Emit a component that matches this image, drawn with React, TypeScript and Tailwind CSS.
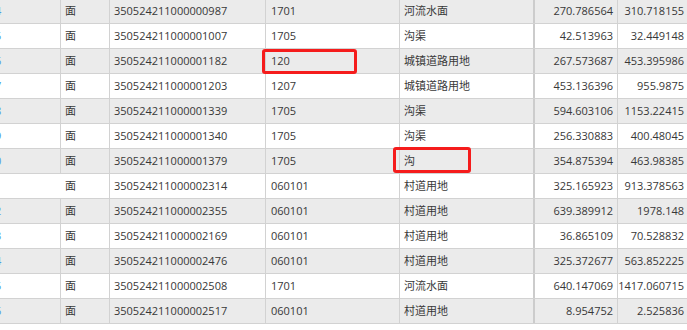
import React from "react";

type Row = { tail: string; code: string; dl: string; name: string; a: string; b: string };

const rows: Row[] = [
  { tail: "4", code: "350524211000000987", dl: "1701", name: "河流水面", a: "270.786564", b: "310.718155" },
  { tail: "5", code: "350524211000001007", dl: "1705", name: "沟渠", a: "42.513963", b: "32.449148" },
  { tail: "6", code: "350524211000001182", dl: "120", name: "城镇道路用地", a: "267.573687", b: "453.395986" },
  { tail: "7", code: "350524211000001203", dl: "1207", name: "城镇道路用地", a: "453.136396", b: "955.9875" },
  { tail: "8", code: "350524211000001339", dl: "1705", name: "沟渠", a: "594.603106", b: "1153.22415" },
  { tail: "9", code: "350524211000001340", dl: "1705", name: "沟渠", a: "256.330883", b: "400.48045" },
  { tail: "0", code: "350524211000001379", dl: "1705", name: "沟", a: "354.875394", b: "463.98385" },
  { tail: "", code: "350524211000002314", dl: "060101", name: "村道用地", a: "325.165923", b: "913.378563" },
  { tail: "2", code: "350524211000002355", dl: "060101", name: "村道用地", a: "639.389912", b: "1978.148" },
  { tail: "3", code: "350524211000002169", dl: "060101", name: "村道用地", a: "36.865109", b: "70.528832" },
  { tail: "4", code: "350524211000002476", dl: "060101", name: "村道用地", a: "325.372677", b: "563.852225" },
  { tail: "5", code: "350524211000002508", dl: "1701", name: "河流水面", a: "640.147069", b: "1417.060715" },
  { tail: "6", code: "350524211000002517", dl: "060101", name: "村道用地", a: "8.954752", b: "2.525836" },
];

function Cells({ r }: { r?: Row }) {
  return (
    <>
      {/* row number column is scrolled out of view, only the last pixels show */}
      <div className="w-[61px] shrink-0 overflow-hidden border-r border-[#d2d2d2]">
        <span className="block -ml-[5px] w-[7px] overflow-hidden text-[#4b9be6]">{r?.tail}</span>
      </div>
      <div className="w-[49px] shrink-0 border-r border-[#d2d2d2] pl-[4px]">{r ? "面" : ""}</div>
      <div className="w-[156px] shrink-0 border-r border-[#d2d2d2] pl-[4px]">{r?.code}</div>
      <div className="w-[134px] shrink-0 border-r border-[#d2d2d2] pl-[5px]">{r?.dl}</div>
      <div className="w-[135px] shrink-0 border-r-2 border-[#cccccc] pl-[4px]">{r?.name}</div>
      <div className="w-[83px] shrink-0 border-r border-[#d2d2d2] pr-[4px] text-right">{r?.a}</div>
      <div className="flex-1 pr-[3px] text-right">{r?.b}</div>
    </>
  );
}

export default function App() {
  return (
    <div
      className="relative h-[330px] w-[687px] overflow-hidden bg-white text-[11px] text-[#383838]"
      style={{ fontFamily: '"Open Sans", "Noto Sans CJK SC", sans-serif' }}
    >
      <div className="-mt-[1px] flex flex-col">
        {rows.map((r, i) => (
          <div
            key={r.code}
            className={`flex h-[25px] items-center border-b border-[#d2d2d2] leading-[24px] ${i % 2 === 0 ? "bg-[#ebebeb]" : "bg-white"}`}
          >
            <Cells r={r} />
          </div>
        ))}
        <div className="flex h-[25px] items-center bg-white leading-[24px]">
          <Cells />
        </div>
      </div>

      <div className="absolute left-[262px] top-[49px] h-[25px] w-[95px] rounded-[3px] border-[3px] border-[#f51c1c]" />
      <div className="absolute left-[393px] top-[147px] h-[26px] w-[78px] rounded-[3px] border-[3px] border-[#f51c1c]" />
    </div>
  );
}
